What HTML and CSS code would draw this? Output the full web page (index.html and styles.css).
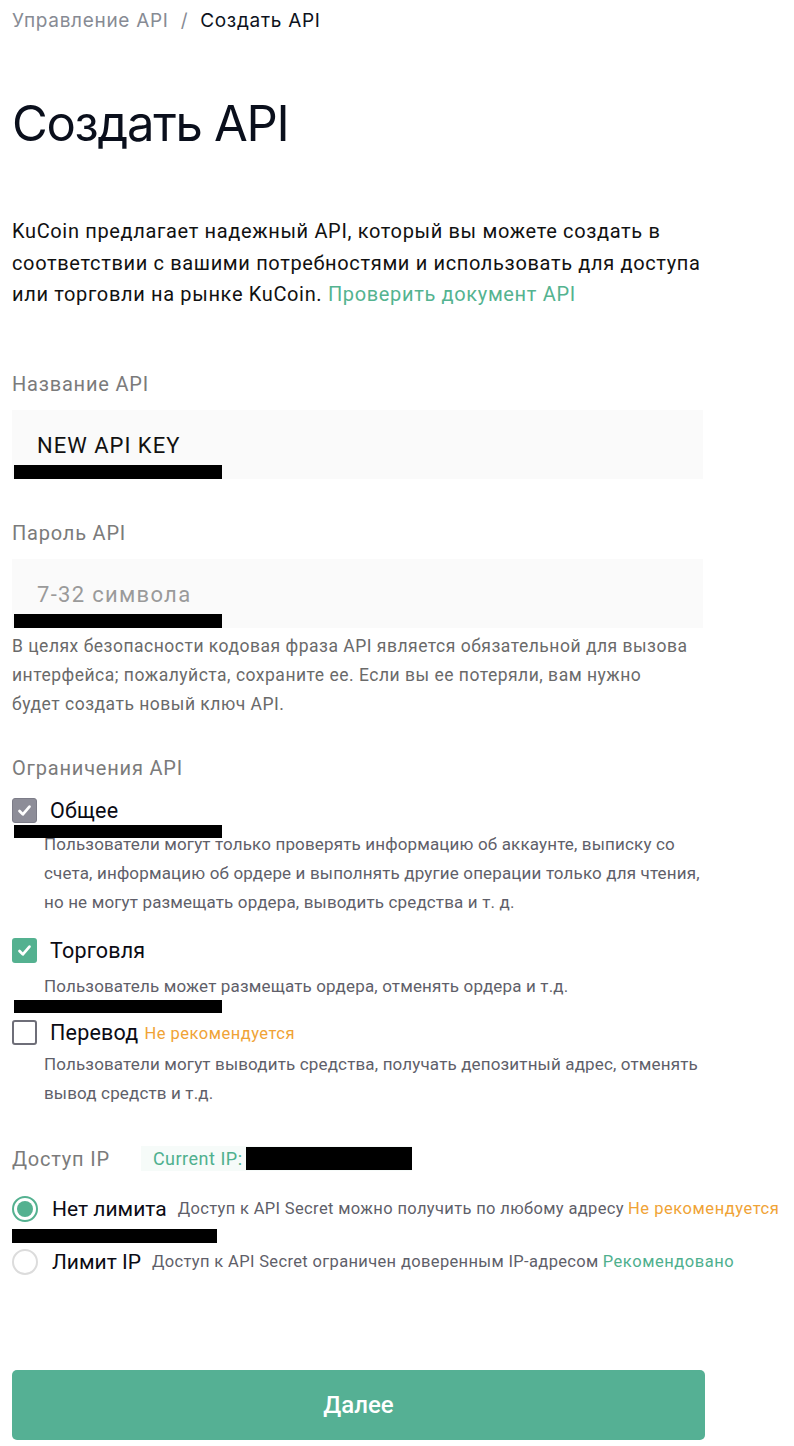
FILE: index.html
```html
<!DOCTYPE html>
<html lang="ru">
<head>
<meta charset="utf-8">
<link rel="stylesheet" href="styles.css">
<title>Создать API</title>
</head>
<body>
<div class="page">
  <nav class="crumbs"><span class="crumb-link">Управление API</span><span class="crumb-sep">/</span><span class="crumb-cur">Создать API</span></nav>
  <h1 class="title">Создать API</h1>
  <p class="intro">KuCoin предлагает надежный API, который вы можете создать в соответствии с вашими потребностями и использовать для доступа или торговли на рынке KuCoin. <a class="link">Проверить документ API</a></p>

  <div class="label l-name">Название API</div>
  <div class="field">
    <div class="input"><span class="value">NEW API KEY</span></div>
    <div class="redact r-field"></div>
  </div>

  <div class="label l-pass">Пароль API</div>
  <div class="field">
    <div class="input"><span class="placeholder">7-32 символа</span></div>
    <div class="redact r-field"></div>
  </div>
  <p class="hint">В целях безопасности кодовая фраза API является обязательной для вызова интерфейса; пожалуйста, сохраните ее. Если вы ее потеряли, вам нужно будет создать новый ключ API.</p>

  <div class="label l-perm">Ограничения API</div>

  <div class="perm p-general">
    <div class="check-row">
      <span class="box box-disabled"><svg viewBox="0 0 16 16" width="19" height="19"><path d="M3.8 8.4l2.8 2.9 5.6-6.6" fill="none" stroke="#fff" stroke-width="2.3" stroke-linecap="round" stroke-linejoin="round"/></svg></span>
      <span class="check-label">Общее</span>
    </div>
    <div class="redact r-general"></div>
    <p class="perm-desc d-general">Пользователи могут только проверять информацию об аккаунте, выписку со счета, информацию об ордере и выполнять другие операции только для чтения, но не могут размещать ордера, выводить средства и т. д.</p>
  </div>

  <div class="perm p-trade">
    <div class="check-row">
      <span class="box box-on"><svg viewBox="0 0 16 16" width="19" height="19"><path d="M3.8 8.4l2.8 2.9 5.6-6.6" fill="none" stroke="#fff" stroke-width="2.3" stroke-linecap="round" stroke-linejoin="round"/></svg></span>
      <span class="check-label">Торговля</span>
    </div>
    <p class="perm-desc d-trade">Пользователь может размещать ордера, отменять ордера и т.д.</p>
    <div class="redact r-trade"></div>
  </div>

  <div class="perm p-transfer">
    <div class="check-row">
      <span class="box box-off"></span>
      <span class="check-label">Перевод</span><span class="warn small">Не рекомендуется</span>
    </div>
    <p class="perm-desc d-transfer">Пользователи могут выводить средства, получать депозитный адрес, отменять вывод средств и т.д.</p>
  </div>

  <div class="ip-row">
    <span class="label ip-label">Доступ IP</span>
    <span class="ip-box"><span class="ip-text">Current IP:</span><span class="ip-redact"></span></span>
  </div>

  <div class="radio-row r1">
    <span class="radio radio-on"><span class="dot"></span></span>
    <span class="radio-label">Нет лимита</span>
    <span class="radio-desc">Доступ к API Secret можно получить по любому адресу</span>
    <span class="warn">Не рекомендуется</span>
    <div class="redact r-radio"></div>
  </div>
  <div class="radio-row r2">
    <span class="radio radio-off"></span>
    <span class="radio-label">Лимит IP</span>
    <span class="radio-desc">Доступ к API Secret ограничен доверенным IP-адресом</span>
    <span class="ok">Рекомендовано</span>
  </div>

  <button class="btn" type="button">Далее</button>
</div>
</body>
</html>
```
FILE: styles.css
```css
* { box-sizing: border-box; }
html, body { margin: 0; padding: 0; background: #fff; }
body { font-family: Roboto, "Noto Sans", "Liberation Sans", sans-serif; color: #0d1220; }
.page { padding: 0 12px; width: 794px; }
p { margin: 0; }

.crumbs { height: 40px; display: flex; align-items: center; font-family: Inter, Roboto, sans-serif; font-size: 19px; letter-spacing: 0.7px; }
.crumb-link { color: #878b94; }
.crumb-sep { color: #878b94; margin: 0 12px; }
.crumb-cur { color: #0d1220; }

.title { margin: 54px 0 0; font-family: Inter, Roboto, sans-serif; font-weight: 400; font-size: 49px; line-height: 60px; color: #0a0f1c; letter-spacing: -1.3px; }

.intro { margin-top: 62px; font-size: 20px; line-height: 31.5px; letter-spacing: 0.65px; color: #111; width: 700px; }
.link { color: #54b390; text-decoration: none; }

.label { font-size: 20px; line-height: 30px; letter-spacing: 0.8px; color: #7b7b7b; }
.l-name { margin-top: 58px; }
.l-pass { margin-top: 39px; }
.l-perm { margin-top: 34px; }

.field { position: relative; margin-top: 11px; width: 691px; }
.input { height: 69px; background: #fafafa; display: flex; align-items: center; padding: 3px 0 0 25px; font-size: 22px; letter-spacing: 1px; }
.value { color: #111; }
.placeholder { color: #9a9a9a; letter-spacing: 1.3px; }
.redact { position: absolute; background: #000; }
.r-field { left: 2px; bottom: 0; width: 208px; height: 14px; }

.hint { margin-top: 4px; font-size: 17.5px; line-height: 29px; letter-spacing: 0.5px; color: #6a6a6a; width: 680px; }

.perm { position: relative; }
.p-general { margin-top: 15px; }
.p-trade { margin-top: 21px; }
.p-transfer { margin-top: 19px; }
.check-row { display: flex; align-items: center; height: 26px; }
.box { width: 25px; height: 25px; border-radius: 3px; display: inline-flex; align-items: center; justify-content: center; flex: none; }
.box-disabled { background: #8d8d98; border: 1px solid #7c7c88; }
.box-on { background: #54b190; }
.box-off { background: #fff; border: 2px solid #6e6e78; }
.check-label { margin-left: 13px; font-size: 21.5px; letter-spacing: 0.2px; color: #0b0b14; }
.small { font-size: 16.5px; letter-spacing: 0.5px; margin-left: 6px; margin-top: 2px; }
.perm-desc { padding-left: 32px; font-size: 17px; line-height: 29px; letter-spacing: 0.15px; color: #5f5f6a; width: 704px; }
.d-general { margin-top: 6px; }
.d-trade { margin-top: 8px; }
.d-transfer { margin-top: 4px; }
.r-general { left: 2px; top: 27px; width: 208px; height: 13px; }
.r-trade { left: 2px; top: 62px; width: 208px; height: 13px; }

.warn { color: #f0a336; }
.ok { color: #4fb08e; }

.ip-row { margin-top: 38px; display: flex; align-items: center; height: 26px; }
.ip-label { margin-right: 31px; }
.ip-box { display: inline-flex; align-items: center; height: 25px; background: #f6fbf9; padding-left: 12px; }
.ip-text { color: #4fb08e; font-size: 18px; letter-spacing: 0.5px; }
.ip-redact { display: inline-block; width: 166px; height: 23px; background: #000; margin-left: 3px; }

.radio-row { position: relative; display: flex; align-items: center; height: 26px; white-space: nowrap; }
.r1 { margin-top: 24px; }
.r2 { margin-top: 27px; }
.radio { width: 26px; height: 26px; border-radius: 50%; display: inline-flex; align-items: center; justify-content: center; flex: none; }
.radio-on { border: 2px solid #54b190; }
.radio-on .dot { width: 16px; height: 16px; border-radius: 50%; background: #54b190; }
.radio-off { border: 2px solid #dcdcdc; }
.radio-label { margin-left: 14px; font-size: 21px; color: #0b0b14; margin-right: 11px; }
.radio-desc { font-size: 16.5px; letter-spacing: 0.35px; color: #5f5f6a; margin-right: 4px; }
.radio-row .warn, .radio-row .ok { font-size: 16.5px; letter-spacing: 0.55px; }
.r-radio { left: 0; top: 33px; width: 205px; height: 14px; }

.btn { display: block; margin-top: 95px; width: 693px; height: 70px; border: 0; border-radius: 5px; background: #55b094; color: #fff; font-family: Roboto, sans-serif; font-size: 24px; font-weight: 500; cursor: pointer; padding: 0; }
```
